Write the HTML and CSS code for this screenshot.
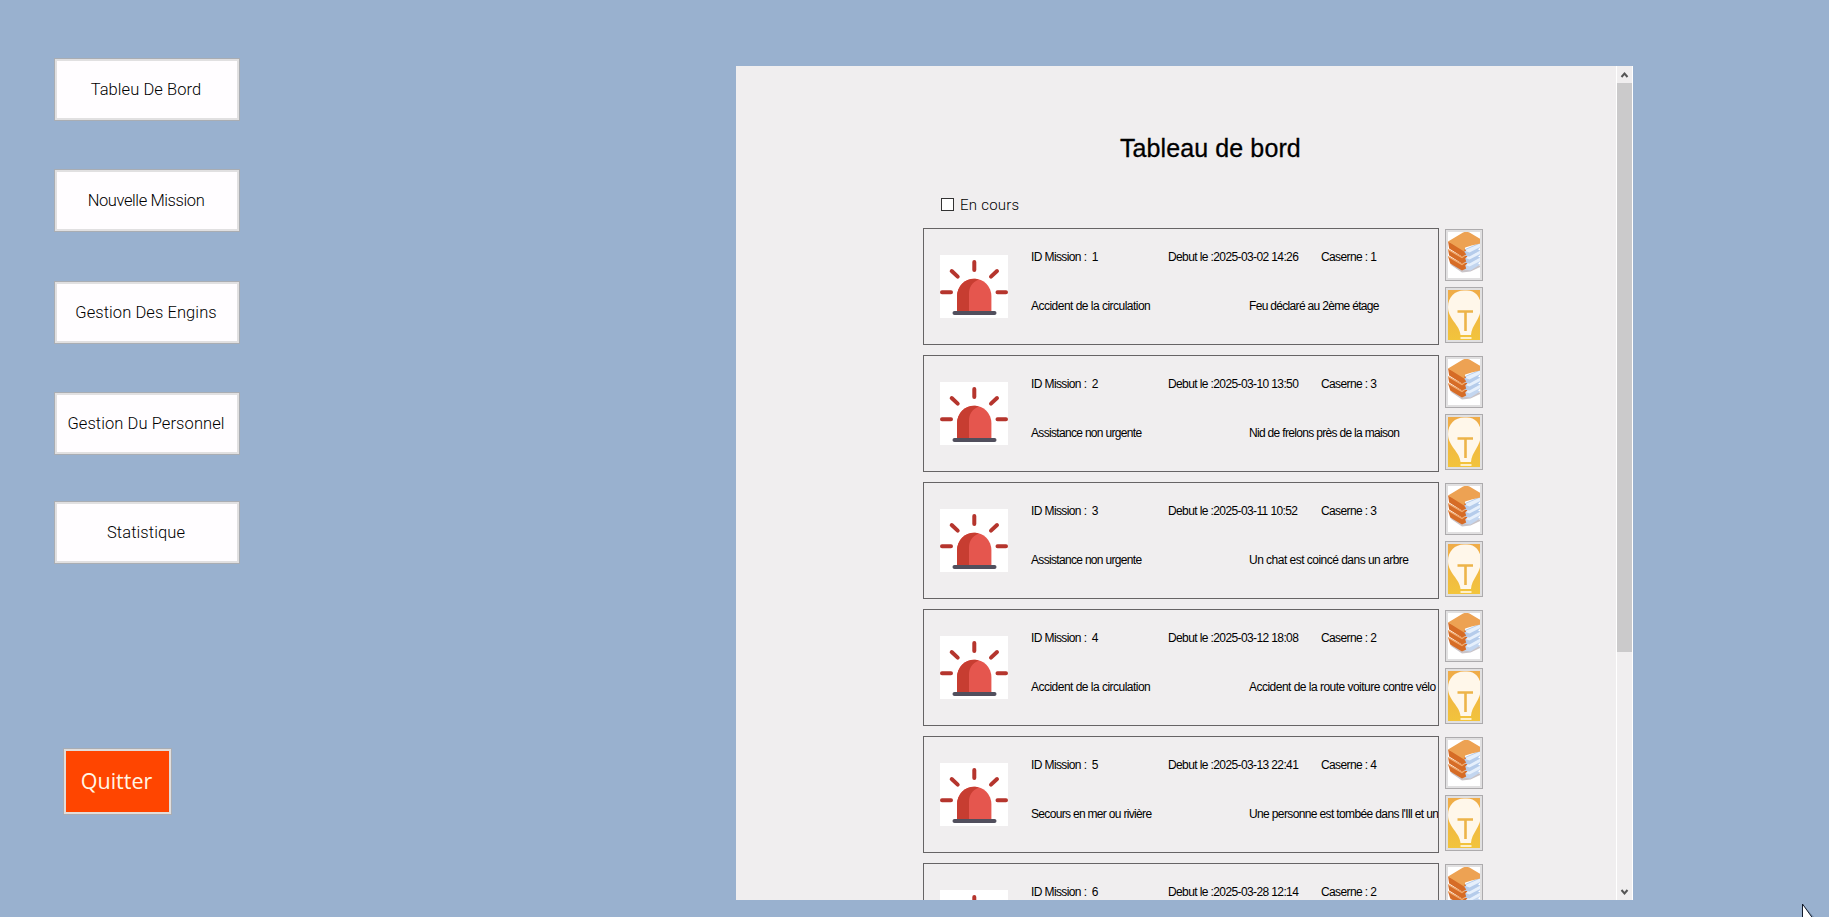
FILE: index.html
```html
<!DOCTYPE html>
<html lang="fr">
<head>
<meta charset="utf-8">
<title>Tableau de bord</title>
<link rel="stylesheet" href="styles.css">
</head>
<body>
<svg class="defs" width="0" height="0">
  <symbol id="siren" viewBox="0 0 68 63" preserveAspectRatio="none">
    <rect width="68" height="63" fill="#fff"/>
    <g stroke="#b5352d" stroke-width="4" stroke-linecap="round">
      <path d="M34.300 7v8M11.700 16l6 5.600M57 16l-6 5.600M2 37.200h9M57.500 37.200h8.500"/>
    </g>
    <path d="M17 57V41a17.200 17.200 0 0 1 34.400 0v16z" fill="#e5564e"/>
    <path d="M17 57V41a17.200 17.200 0 0 1 17.200-17.200c2 0 3 .2 4.500.7C32 27.500 29 32 29 39v18z" fill="#c73d31"/>
    <path d="M14.500 58h40" stroke="#514f5d" stroke-width="4" stroke-linecap="round"/>
  </symbol>
  <filter id="soft"><feGaussianBlur stdDeviation=".6"/></filter>
  <symbol id="books" viewBox="0 0 32 46">
    <rect width="32" height="46" fill="#fff"/>
    <g filter="url(#soft)" transform="translate(-1 -.5) scale(1.07 1)">
      <path d="M3 33l11 8 8-1 10-5-6-4z" fill="#c9c4c8"/>
      <path d="M16 33l15-7 1 3-3 3 2 1-9 6-6-1z" fill="#c3d6f0"/>
      <path d="M16 33l15-7 1 3-11 6z" fill="#e6f0fc"/>
      <path d="M1 25l13 7 4-3 1 3-2 2 1 3-4 2L3 32z" fill="#d66c28"/>
      <path d="M1 25l13 8 4-3" fill="none" stroke="#f2ad70" stroke-width="1.400"/>
      <path d="M16 26l15-7 1 4-3 2 2 1-10 6-5-1z" fill="#b5cceb"/>
      <path d="M16 26l15-7 1 3-11 6z" fill="#e6f0fc"/>
      <path d="M1 18l13 7 4-3 1 3-2 2 1 3-4 2L2 24z" fill="#d66c28"/>
      <path d="M1 18l13 8 4-3" fill="none" stroke="#f2ad70" stroke-width="1.400"/>
      <path d="M16 18l15-7 1 4-3 3 2 1-10 6-5-1z" fill="#b5cceb"/>
      <path d="M16 19l15-7 1 3-11 6z" fill="#e6f0fc"/>
      <path d="M1 10l15 7 2 2-2 1 2 3-4 2L2 17z" fill="#d66c28"/>
      <path d="M1 10L15 1q3-1.500 6 0l11 7-1 4-8 2-6 2-1 4z" fill="#eda252"/>
    </g>
  </symbol>
  <linearGradient id="amber" x1="0" y1="0" x2="0" y2="1">
    <stop offset="0" stop-color="#efab48"/><stop offset="1" stop-color="#f2c43c"/>
  </linearGradient>
  <symbol id="bulb" viewBox="0 0 32 50">
    <rect width="32" height="50" fill="url(#amber)"/>
    <g filter="url(#soft)">
      <path d="M12.500 45C12 35 0 29 0 17 0 7 7 .5 16 .5h3c8 0 14 6 14 16.500 0 12-9.500 18-10 28z" fill="#fff7ea"/>
      <path d="M9.500 21.500h15.500M17.500 22v19" fill="none" stroke="#edb448" stroke-width="2.600"/>
      <path d="M12.500 48h11" stroke="#fff0c9" stroke-width="2"/>
    </g>
  </symbol>
</svg>

<main class="window">
  <nav class="sidebar">
    <button class="nav-button">Tableu De Bord</button>
    <button class="nav-button tight">Nouvelle Mission</button>
    <button class="nav-button">Gestion Des Engins</button>
    <button class="nav-button">Gestion Du Personnel</button>
    <button class="nav-button">Statistique</button>
    <button class="quit-button">Quitter</button>
  </nav>

  <section class="panel">
    <div class="content">
      <h1 class="title">Tableau de bord</h1>
      <label class="filter"><span class="box"></span><span class="filter-text">En cours</span></label>

      <div class="missions">
        <div class="mission">
          <article class="card">
            <svg class="siren"><use href="#siren"/></svg>
            <div class="info">
              <div class="row"><span class="id">ID Mission :&nbsp; 1</span><span class="date">Debut le :2025-03-02 14:26</span><span class="station">Caserne : 1</span></div>
              <div class="row"><span class="kind">Accident de la circulation</span><span class="note narrow">Feu déclaré au 2ème étage</span></div>
            </div>
          </article>
          <div class="actions"><button class="action books"><svg><use href="#books"/></svg></button><button class="action bulb"><svg><use href="#bulb"/></svg></button></div>
        </div>
        <div class="mission">
          <article class="card">
            <svg class="siren"><use href="#siren"/></svg>
            <div class="info">
              <div class="row"><span class="id">ID Mission :&nbsp; 2</span><span class="date">Debut le :2025-03-10 13:50</span><span class="station">Caserne : 3</span></div>
              <div class="row"><span class="kind narrow">Assistance non urgente</span><span class="note narrow">Nid de frelons près de la maison</span></div>
            </div>
          </article>
          <div class="actions"><button class="action books"><svg><use href="#books"/></svg></button><button class="action bulb"><svg><use href="#bulb"/></svg></button></div>
        </div>
        <div class="mission">
          <article class="card">
            <svg class="siren"><use href="#siren"/></svg>
            <div class="info">
              <div class="row"><span class="id">ID Mission :&nbsp; 3</span><span class="date">Debut le :2025-03-11 10:52</span><span class="station">Caserne : 3</span></div>
              <div class="row"><span class="kind narrow">Assistance non urgente</span><span class="note">Un chat est coincé dans un arbre</span></div>
            </div>
          </article>
          <div class="actions"><button class="action books"><svg><use href="#books"/></svg></button><button class="action bulb"><svg><use href="#bulb"/></svg></button></div>
        </div>
        <div class="mission">
          <article class="card">
            <svg class="siren"><use href="#siren"/></svg>
            <div class="info">
              <div class="row"><span class="id">ID Mission :&nbsp; 4</span><span class="date">Debut le :2025-03-12 18:08</span><span class="station">Caserne : 2</span></div>
              <div class="row"><span class="kind">Accident de la circulation</span><span class="note">Accident de la route voiture contre vélo</span></div>
            </div>
          </article>
          <div class="actions"><button class="action books"><svg><use href="#books"/></svg></button><button class="action bulb"><svg><use href="#bulb"/></svg></button></div>
        </div>
        <div class="mission">
          <article class="card">
            <svg class="siren"><use href="#siren"/></svg>
            <div class="info">
              <div class="row"><span class="id">ID Mission :&nbsp; 5</span><span class="date">Debut le :2025-03-13 22:41</span><span class="station">Caserne : 4</span></div>
              <div class="row"><span class="kind narrow">Secours en mer ou rivière</span><span class="note long">Une personne est tombée dans l'Ill et un</span></div>
            </div>
          </article>
          <div class="actions"><button class="action books"><svg><use href="#books"/></svg></button><button class="action bulb"><svg><use href="#bulb"/></svg></button></div>
        </div>
        <div class="mission">
          <article class="card">
            <svg class="siren"><use href="#siren"/></svg>
            <div class="info">
              <div class="row"><span class="id">ID Mission :&nbsp; 6</span><span class="date">Debut le :2025-03-28 12:14</span><span class="station">Caserne : 2</span></div>
            </div>
          </article>
          <div class="actions"><button class="action books"><svg><use href="#books"/></svg></button></div>
        </div>
      </div>
    </div>
    <div class="scrollbar">
      <svg class="arrow" viewBox="0 0 15 17"><path d="M4.500 11l3-3.500 3 3.500" fill="none" stroke="#555" stroke-width="2"/></svg>
      <div class="thumb"></div>
      <svg class="arrow arrow-down" viewBox="0 0 15 17"><path d="M4.500 7l3 3.500 3-3.500" fill="none" stroke="#555" stroke-width="2"/></svg>
    </div>
  </section>
</main>
<svg class="cursor" viewBox="0 0 14 13"><path d="M3 3l9 10H5z" fill="#637b98" opacity=".6"/><path d="M.5 0v14h10z" fill="#fff" stroke="#111a2b"/></svg>
</body>
</html>
```
FILE: styles.css
```css
* { box-sizing: border-box; }
body {
  margin: 0;
  height: 917px;
  overflow: hidden;
  background: #99b1cf;
  color: #000;
  font-family: "Liberation Sans", Arial, sans-serif;
}
button { font: inherit; padding: 0; border-radius: 0; color: inherit; }
svg { display: block; }
.defs { position: absolute; }

.window { display: flex; height: 917px; }
.sidebar {
  display: flex;
  flex-direction: column;
  align-items: flex-start;
  width: 736px;
  padding: 58px 0 0 54px;
}
.nav-button {
  width: 186px;
  height: 63px;
  margin-bottom: 48px;
  border: 1px solid #a9adb3;
  box-shadow: inset 0 0 0 2px #e1e0e1;
  background: #fffdff;
  font-family: Roboto, "Liberation Sans", sans-serif;
  font-weight: 300;
  font-size: 16.500px;
  letter-spacing: .08px;
  padding: 0 2px 1px 0;
  color: #000;
}
.nav-button:nth-child(2) { margin-bottom: 49px; }
.nav-button:nth-child(4) { margin-bottom: 46px; }
.nav-button.tight { letter-spacing: -.4px; }
.quit-button {
  width: 109px;
  height: 67px;
  margin: 136px 0 0 9px;
  border: 1px solid #a9adb3;
  box-shadow: inset 0 0 0 2px #e1dddb;
  background: #ff4500;
  color: #fff6e6;
  font-family: "Open Sans", sans-serif;
  font-size: 21.500px;
  padding: 0 2px 3px 0;
}

.panel {
  display: flex;
  width: 897px;
  height: 834px;
  margin-top: 66px;
  background: #f0eeef;
  overflow: hidden;
}
.content { width: 880px; padding: 66px 0 0 187px; }
.title {
  margin: 0 0 0 197px;
  height: 32px;
  font-weight: 400;
  font-size: 25px;
  line-height: 32px;
  letter-spacing: .1px;
  white-space: nowrap;
  -webkit-text-stroke: .3px #000;
}
.filter { display: flex; align-items: center; height: 18px; margin: 31px 0 0 18px; }
.box { width: 13px; height: 13px; border: 1px solid #333; background: #fff; }
.filter-text { margin: 1px 0 0 6px; font: 300 15px Roboto, sans-serif; letter-spacing: .25px; }

.missions { display: flex; flex-direction: column; gap: 10px; margin-top: 15px; }
.mission { display: flex; gap: 6px; height: 117px; }
.card {
  display: flex;
  width: 516px;
  border: 1px solid #666465;
  overflow: hidden;
  font-size: 12px;
  letter-spacing: -.52px;
  white-space: nowrap;
}
.siren { flex: none; width: 68px; height: 63px; margin: 26px 23px 0 16px; }
.info { flex: 1; min-width: 0; padding-top: 20px; }
.row { display: flex; height: 49px; line-height: 16px; }
.row span { flex: none; }
.row .id { width: 137px; }
.row .date { width: 153px; }
.row .kind { width: 218px; }
.id, .date, .station { letter-spacing: -.61px; }
.narrow { letter-spacing: -.68px; }
.long { letter-spacing: -.63px; }
.actions { display: flex; flex-direction: column; gap: 6px; padding-top: 1px; }
.action {
  width: 38px;
  border: 1px solid #adabad;
  background: #e1e0e1;
  padding: 2px;
}
.books { height: 52px; }
.bulb { height: 56px; }
.action svg { width: 32px; height: 46px; }
.bulb svg { height: 50px; }

.scrollbar {
  width: 17px;
  border: solid #fff;
  border-width: 0 1px;
  display: flex;
  flex-direction: column;
}
.arrow { width: 15px; height: 17px; }
.thumb { height: 569px; background: #cbcacb; }
.arrow-down { margin-top: auto; }
.cursor { position: absolute; left: 1802px; top: 904px; width: 14px; height: 13px; }
```
